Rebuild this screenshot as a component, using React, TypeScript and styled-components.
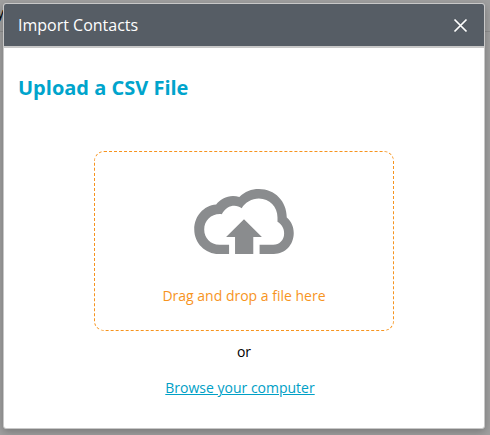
import React, { useRef } from "react";
import styled, { createGlobalStyle } from "styled-components";

const GlobalStyle = createGlobalStyle`
  *, *::before, *::after { box-sizing: border-box; }
  html, body, #root { height: 100%; }
  body {
    margin: 0;
    overflow: hidden;
    background: #a0a0a0;
    font-family: "Open Sans", "Noto Sans", sans-serif;
    font-size: 14px;
    line-height: 20px;
    color: #000;
  }
`;

const Page = styled.div`
  position: relative;
  min-height: 100%;
`;

const PageBar = styled.div`
  height: 32px;
  padding-top: 3px;
  border-bottom: 1px solid #8e8e8e;
`;

const PageLabel = styled.div`
  width: 4px;
  overflow: hidden;
  white-space: nowrap;
  direction: rtl;
`;

const Overlay = styled.div`
  position: absolute;
  inset: 0;
  display: flex;
  padding: 3px 5px 6px 3px;
`;

const Dialog = styled.section`
  flex: 1;
  display: flex;
  flex-direction: column;
  overflow: hidden;
  background: #fff;
  border: 1px solid #c8c8c8;
  border-radius: 3px;
  box-shadow: 0 3px 9px rgba(0, 0, 0, 0.25);
`;

const Header = styled.header`
  display: flex;
  align-items: center;
  justify-content: space-between;
  height: 44px;
  padding: 0 16px 0 14px;
  background: #565d65;
  border-bottom: 2px solid #c8c8c8;
  color: #fff;
`;

const Title = styled.h1`
  margin: 0;
  font-size: 16px;
  line-height: 24px;
  font-weight: 400;
`;

const CloseButton = styled.button`
  display: flex;
  padding: 0;
  border: 0;
  background: none;
  color: inherit;
  cursor: pointer;
`;

const Body = styled.div`
  flex: 1;
  display: flex;
  flex-direction: column;
  align-items: center;
  padding: 26px 14px;
`;

const Heading = styled.h2`
  align-self: stretch;
  margin: 0 0 49px;
  font-size: 20px;
  line-height: 28px;
  font-weight: 700;
  color: #00a4cc;
`;

const DropZone = styled.div`
  display: flex;
  flex-direction: column;
  align-items: center;
  gap: 32px;
  width: 100%;
  max-width: 300px;
  padding: 37px 16px 24px;
  border: 1px dashed #f7941e;
  border-radius: 10px;
  color: #f7941e;
`;

const Or = styled.p`
  margin: 11px 0 16px;
`;

const BrowseLink = styled.a`
  margin-right: 8px;
  color: #00a0c6;
  text-decoration: underline;
`;

const CloudUploadIcon = () => (
  <svg width="100" height="65" viewBox="42 41 300 196" fill="#8a8c8e" aria-hidden="true">
    <path d="M147 237H116C75 237 42 204 42 163C42 124 70 91 108 88C122 68 150 56 178 65C195 49 214 41 237 41C285 41 321 78 321 127C335 139 342 155 342 174C342 210 316 237 282 237H239V209H280C299 209 313 195 313 175C313 160 306 148 293 140V127C293 95 269 70 237 70C215 70 196 82 185 99C169 86 140 88 125 117C95 114 72 135 72 163C72 189 91 209 118 209H147Z" />
    <path d="M192 132L246 186H220V237H165V186H138Z" />
  </svg>
);

const CloseIcon = () => (
  <svg width="15" height="15" viewBox="0 0 15 15" fill="none" stroke="currentColor" strokeWidth="1.7" aria-hidden="true">
    <path d="M1.500 1.500L13.500 13.500M13.500 1.500L1.500 13.500" />
  </svg>
);

export default function App() {
  const fileInput = useRef<HTMLInputElement>(null);

  const browse = (event: React.MouseEvent) => {
    event.preventDefault();
    fileInput.current?.click();
  };

  return (
    <>
      <GlobalStyle />
      <Page>
        <PageBar>
          <PageLabel>y</PageLabel>
        </PageBar>
        <Overlay>
          <Dialog role="dialog" aria-modal="true" aria-labelledby="dialog-title">
            <Header>
              <Title id="dialog-title">Import Contacts</Title>
              <CloseButton type="button" aria-label="Close">
                <CloseIcon />
              </CloseButton>
            </Header>
            <Body>
              <Heading>Upload a CSV File</Heading>
              <DropZone onDragOver={(event) => event.preventDefault()}>
                <CloudUploadIcon />
                <span>Drag and drop a file here</span>
              </DropZone>
              <Or>or</Or>
              <BrowseLink href="#" onClick={browse}>
                Browse your computer
              </BrowseLink>
              <input ref={fileInput} type="file" accept=".csv" aria-label="CSV file" hidden />
            </Body>
          </Dialog>
        </Overlay>
      </Page>
    </>
  );
}
